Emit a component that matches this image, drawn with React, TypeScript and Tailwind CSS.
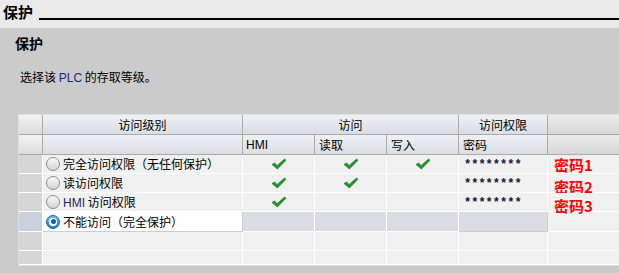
import React from "react";

const cjk = { fontFamily: '"Noto Sans CJK SC", "Liberation Sans", sans-serif' };

const Check: React.FC = () => (
  <svg width="16" height="12" viewBox="0 0 16 12">
    <path
      d="M1 6.5 L3.5 5 L6.2 7.6 L13.5 1 L15 2.2 L6.4 11 Z"
      fill="#1f9a2a"
      stroke="#0f6b18"
      strokeWidth="0.6"
      strokeLinejoin="round"
    />
  </svg>
);

const Radio: React.FC<{ on?: boolean }> = ({ on }) =>
  on ? (
    <span className="w-[14px] h-[14px] rounded-full bg-gradient-to-b from-[#6fc4f2] to-[#1a7fd0] border border-[#1f5e9a] flex items-center justify-center shrink-0">
      <span className="w-[8px] h-[8px] rounded-full bg-white flex items-center justify-center">
        <span className="w-[5px] h-[5px] rounded-full bg-[#0d5fb0]" />
      </span>
    </span>
  ) : (
    <span className="w-[14px] h-[14px] rounded-full bg-gradient-to-b from-[#fafafa] to-[#d4d4d4] border border-[#8c8c8c] shrink-0" />
  );

const hdr = "bg-gradient-to-b from-[#eef1f4] to-[#d9dee4] border-r border-b border-[#aaaaaa] flex items-center text-[12px] text-black";
const grayHdr = "bg-gradient-to-b from-[#ececec] to-[#d6d6d6] border-b border-[#aaaaaa] flex-1";

interface Row {
  label: React.ReactNode;
  hmi?: boolean;
  read?: boolean;
  write?: boolean;
  pw?: string;
  note?: string;
}

const rows: Row[] = [
  { label: "完全访问权限（无任何保护）", hmi: true, read: true, write: true, pw: "********", note: "密码1" },
  { label: "读访问权限", hmi: true, read: true, pw: "********", note: "密码2" },
  { label: <><span className="font-['Liberation_Sans'] text-[#2a1a6a]">HMI</span> 访问权限</>, hmi: true, pw: "********", note: "密码3" },
];

const cell = "bg-[#f0f0f0] border-r border-b border-white flex items-center justify-center";

const App: React.FC = () => {
  return (
    <div className="w-[619px] h-[273px] bg-[#cbcbcb] overflow-hidden" style={cjk}>
      <div className="h-[28px] bg-[#e9e9e9] flex items-start">
        <span className="text-[15px] font-bold leading-none pl-[3px] pt-[4px] text-black">保护</span>
        <div className="flex-1 ml-[6px] mt-[18px] h-[2px] bg-black" />
      </div>
      <div className="pl-[15px] pt-[6px] text-[14px] font-bold leading-[18px] text-black">保护</div>
      <div className="pl-[20px] pt-[17px] text-[12px] leading-[16px] text-black">
        选择该 <span className="font-['Liberation_Sans'] text-[#1c2a7a]">PLC</span> 的存取等级。
      </div>

      <div className="ml-[18px] mt-[28px] border-l border-t border-[#dedede]">
        <div className="flex h-[20px]">
          <div className="w-[24px] bg-gradient-to-b from-[#f2f2f2] to-[#dcdcdc] border-r border-b border-[#aaaaaa]" />
          <div className={`${hdr} w-[200px] justify-center`}>访问级别</div>
          <div className={`${hdr} w-[216px] justify-center`}>访问</div>
          <div className={`${hdr} w-[89px] justify-center`}>访问权限</div>
          <div className={grayHdr} />
        </div>
        <div className="flex h-[20px]">
          <div className="w-[24px] bg-gradient-to-b from-[#f2f2f2] to-[#dcdcdc] border-r border-b border-[#aaaaaa]" />
          <div className={`${hdr} w-[200px]`} />
          <div className={`${hdr} w-[72px] pl-[3px] font-['Liberation_Sans'] text-[#1c1c5a]`}>HMI</div>
          <div className={`${hdr} w-[72px] pl-[4px]`}>读取</div>
          <div className={`${hdr} w-[72px] pl-[4px]`}>写入</div>
          <div className={`${hdr} w-[89px] pl-[4px]`}>密码</div>
          <div className={grayHdr} />
        </div>

        {rows.map((r, i) => (
          <div key={i} className="flex h-[19px]">
            <div className="w-[24px] bg-[#d6d6d6] border-r border-b border-white" />
            <div className="w-[200px] bg-[#f0f0f0] border-r border-b border-white flex items-center gap-[3px] pl-[3px] text-[12px] text-black whitespace-nowrap">
              <Radio />
              <span>{r.label}</span>
            </div>
            <div className={`${cell} w-[72px]`}>{r.hmi && <Check />}</div>
            <div className={`${cell} w-[72px]`}>{r.read && <Check />}</div>
            <div className={`${cell} w-[72px]`}>{r.write && <Check />}</div>
            <div className="w-[89px] bg-[#f0f0f0] border-r border-b border-white flex items-center pl-[5px] text-[12px] font-bold text-[#14143c] font-['Liberation_Mono'] leading-none pt-[2px]">
              {r.pw}
            </div>
            <div className="flex-1 bg-[#f0f0f0] border-b border-white flex items-center pl-[6px] relative">
              <span className={`text-[15px] font-bold text-[#ff0000] leading-none relative ${i === 0 ? "top-[0px]" : "top-[3px]"}`}>
                {r.note}
              </span>
            </div>
          </div>
        ))}

        <div className="flex h-[20px]">
          <div className="w-[24px] bg-[#c8d2dc] border-r border-b border-white" />
          <div className="w-[200px] bg-white border-r border-b border-[#c5cfd9] flex items-center gap-[3px] pl-[3px] text-[12px] text-black whitespace-nowrap">
            <Radio on />
            <span>不能访问（完全保护）</span>
          </div>
          <div className="w-[72px] bg-[#d9dde2] border-r border-b border-white" />
          <div className="w-[72px] bg-[#d9dde2] border-r border-b border-white" />
          <div className="w-[72px] bg-[#d9dde2] border-r border-b border-white" />
          <div className="w-[89px] bg-[#d9dde2] border-r border-b border-[#c5cfd9]" />
          <div className="flex-1 bg-[#f0f0f0] border-b border-white" />
        </div>
        {[19, 14].map((h, i) => (
          <div key={i} className={`flex ${i === 0 ? "h-[19px]" : "h-[14px]"}`}>
            <div className="w-[24px] bg-[#d6d6d6] border-r border-b border-white" />
            <div className="w-[200px] bg-[#f0f0f0] border-r border-b border-white" />
            <div className="w-[72px] bg-[#f0f0f0] border-r border-b border-white" />
            <div className="w-[72px] bg-[#f0f0f0] border-r border-b border-white" />
            <div className="w-[72px] bg-[#f0f0f0] border-r border-b border-white" />
            <div className="w-[89px] bg-[#f0f0f0] border-r border-b border-white" />
            <div className="flex-1 bg-[#f0f0f0] border-b border-white" />
          </div>
        ))}
        <div className="h-[1px] bg-[#dedede]" />
      </div>
    </div>
  );
};

export default App;
